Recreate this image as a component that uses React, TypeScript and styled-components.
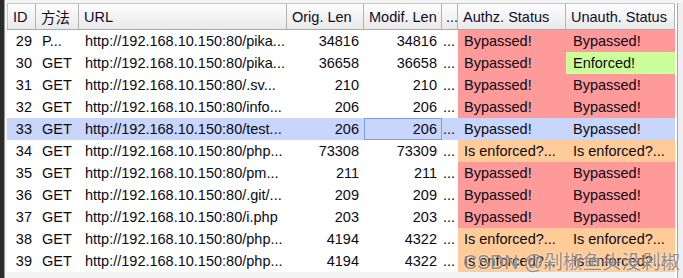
import styled, { createGlobalStyle } from "styled-components";

type Tone = "plain" | "red" | "green" | "orange";

type Row = {
  id: number;
  method: string;
  path: string;
  orig: string;
  modif: string;
  authz: string;
  authzTone: Tone;
  unauth: string;
  unauthTone: Tone;
  selected?: boolean;
};

const HOST = "http://192.168.10.150:80";
const BYP = "Bypassed!";
const ISE = "Is enforced?...";

const rows: Row[] = [
  { id: 29, method: "P...", path: "/pika...", orig: "34816", modif: "34816", authz: BYP, authzTone: "red", unauth: BYP, unauthTone: "red" },
  { id: 30, method: "GET", path: "/pika...", orig: "36658", modif: "36658", authz: BYP, authzTone: "red", unauth: "Enforced!", unauthTone: "green" },
  { id: 31, method: "GET", path: "/.sv...", orig: "210", modif: "210", authz: BYP, authzTone: "red", unauth: BYP, unauthTone: "red" },
  { id: 32, method: "GET", path: "/info...", orig: "206", modif: "206", authz: BYP, authzTone: "red", unauth: BYP, unauthTone: "red" },
  { id: 33, method: "GET", path: "/test...", orig: "206", modif: "206", authz: BYP, authzTone: "plain", unauth: BYP, unauthTone: "plain", selected: true },
  { id: 34, method: "GET", path: "/php...", orig: "73308", modif: "73309", authz: ISE, authzTone: "orange", unauth: ISE, unauthTone: "orange" },
  { id: 35, method: "GET", path: "/pm...", orig: "211", modif: "211", authz: BYP, authzTone: "red", unauth: BYP, unauthTone: "red" },
  { id: 36, method: "GET", path: "/.git/...", orig: "209", modif: "209", authz: BYP, authzTone: "red", unauth: BYP, unauthTone: "red" },
  { id: 37, method: "GET", path: "/i.php", orig: "203", modif: "203", authz: BYP, authzTone: "red", unauth: BYP, unauthTone: "red" },
  { id: 38, method: "GET", path: "/php...", orig: "4194", modif: "4322", authz: ISE, authzTone: "orange", unauth: ISE, unauthTone: "orange" },
  { id: 39, method: "GET", path: "/php...", orig: "4194", modif: "4322", authz: ISE, authzTone: "orange", unauth: ISE, unauthTone: "orange" },
];

const toneColors: Record<Tone, string> = {
  plain: "transparent",
  red: "#ff9a9a",
  green: "#ccff99",
  orange: "#ffcc99",
};

const App = () => {
  return (
    <>
      <GlobalStyle />
      <Window>
        <DarkEdge />
        <Frame>
          <Table>
            <HeaderRow>
              <HeadCell>ID</HeadCell>
              <HeadCell>方法</HeadCell>
              <HeadCell>URL</HeadCell>
              <HeadCell>Orig. Len</HeadCell>
              <HeadCell>Modif. Len</HeadCell>
              <HeadCell $pad={4}>...</HeadCell>
              <HeadCell>Authz. Status</HeadCell>
              <HeadCell>Unauth. Status</HeadCell>
            </HeaderRow>
            {rows.map((r) => (
              <DataRow key={r.id} $selected={!!r.selected}>
                <Cell $align="right" $padR={4}>{r.id}</Cell>
                <Cell>{r.method}</Cell>
                <Cell>{HOST + r.path}</Cell>
                <Cell $align="right" $padR={5}>{r.orig}</Cell>
                <Cell $align="right" $padR={5} $focused={!!r.selected}>
                  {r.modif}
                </Cell>
                <Cell $padL={1}>...</Cell>
                <Cell $tone={r.authzTone}>{r.authz}</Cell>
                <Cell $tone={r.unauthTone} $padL={7}>{r.unauth}</Cell>
              </DataRow>
            ))}
          </Table>
          <Gutter />
        </Frame>
        <Watermark>CSDN @剁椒鱼头没剁椒</Watermark>
      </Window>
    </>
  );
};

export default App;

const GlobalStyle = createGlobalStyle`
  html, body {
    margin: 0;
    padding: 0;
    background: #f3f3f3;
  }
`;

const COLS = "29px 43px 208px 77px 78px 16px 108px 109px";

const Window = styled.div`
  position: relative;
  display: flex;
  width: 683px;
  height: 278px;
  overflow: hidden;
  font-family: "Liberation Sans", Arial, "Noto Sans CJK SC", sans-serif;
  font-size: 14.5px;
`;

const DarkEdge = styled.div`
  width: 4px;
  background: #2b2b2b;
`;

const Frame = styled.div`
  flex: 1;
  display: flex;
  border-left: 1px solid #9a9a9a;
  padding: 3px 0 0 2px;
  background: #f4f4f4;
`;

const Table = styled.div`
  display: flex;
  flex-direction: column;
  width: 668px;
  align-self: flex-start;
  background: #fff;
`;

const HeaderRow = styled.div`
  display: grid;
  grid-template-columns: ${COLS};
  height: 27px;
  box-sizing: border-box;
  border-top: 1px solid #c4c4c4;
  border-bottom: 1px solid #a9a9a9;
  background: linear-gradient(#fdfdfd, #e9e9e9);
`;

const HeadCell = styled.div<{ $pad?: number }>`
  display: flex;
  align-items: center;
  padding-left: ${({ $pad }) => $pad ?? 5}px;
  border-right: 1px solid #b3b3b3;
  color: #0d0d2a;
  white-space: nowrap;
  overflow: hidden;
  &:first-child {
    border-left: 1px solid #c4c4c4;
  }
`;

const DataRow = styled.div<{ $selected: boolean }>`
  display: grid;
  grid-template-columns: ${COLS};
  height: 22px;
  background: ${({ $selected }) => ($selected ? "#c9d6fb" : "#fff")};
`;

const Cell = styled.div<{
  $align?: "left" | "right";
  $padL?: number;
  $padR?: number;
  $tone?: Tone;
  $focused?: boolean;
}>`
  box-sizing: border-box;
  line-height: 22px;
  text-align: ${({ $align }) => $align ?? "left"};
  padding-left: ${({ $padL }) => $padL ?? 6}px;
  padding-right: ${({ $padR }) => $padR ?? 0}px;
  background: ${({ $tone }) => toneColors[$tone ?? "plain"]};
  box-shadow: ${({ $focused }) => ($focused ? "inset 0 0 0 1px #7c9fcf" : "none")};
  color: #0a0a14;
  white-space: nowrap;
  overflow: hidden;
`;

const Gutter = styled.div`
  width: 8px;
  background: linear-gradient(to right, #fff 0 2px, #a8a8a8 2px 3px, #efefef 3px);
`;

const Watermark = styled.div`
  position: absolute;
  right: 3px;
  bottom: 5px;
  font-family: "Liberation Sans", "Noto Sans CJK SC", sans-serif;
  font-size: 19.5px;
  line-height: 22px;
  color: rgba(105, 105, 105, 0.72);
  text-shadow: 0 0 2px rgba(255, 255, 255, 0.9);
  white-space: nowrap;
  pointer-events: none;
`;
